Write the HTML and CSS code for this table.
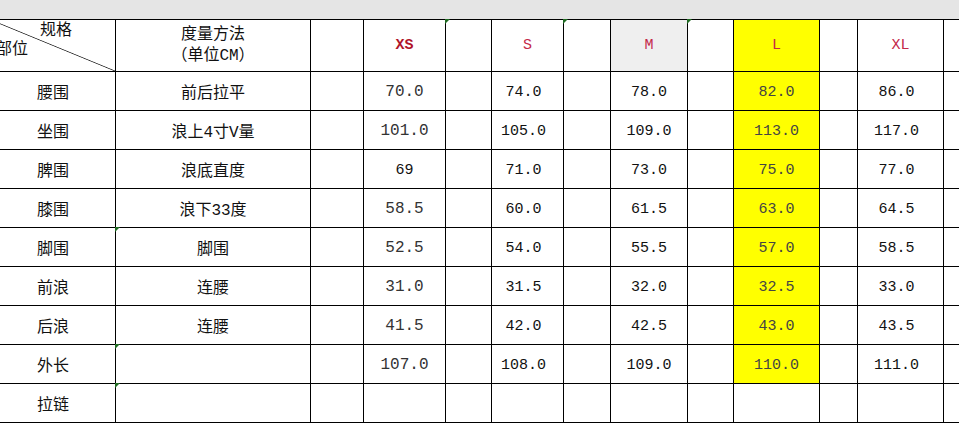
FILE: index.html
```html
<!DOCTYPE html>
<html lang="zh">
<head>
<meta charset="utf-8">
<title>尺码表</title>
<link rel="stylesheet" href="styles.css">
</head>
<body>
<div class="topbar"></div>
<div class="sheet">
  <div class="c head corner"><span class="spec">规格</span><span class="part">部位</span></div>
  <div class="c head method"><span>度量方法</span><span>（单位CM）</span></div>
  <div class="c"></div>
  <div class="c size bold">XS</div>
  <div class="c note"></div>
  <div class="c size">S</div>
  <div class="c note"></div>
  <div class="c size grey">M</div>
  <div class="c note"></div>
  <div class="c size hl">L</div>
  <div class="c"></div>
  <div class="c size">XL</div>
  <div class="c"></div>

  <div class="c zh">腰围</div><div class="c zh">前后拉平</div><div class="c"></div><div class="c num big">70.0</div><div class="c"></div><div class="c num off">74.0</div><div class="c"></div><div class="c num">78.0</div><div class="c"></div><div class="c num hl">82.0</div><div class="c"></div><div class="c num off">86.0</div><div class="c"></div>

  <div class="c zh">坐围</div><div class="c zh">浪上4寸V量</div><div class="c"></div><div class="c num big">101.0</div><div class="c"></div><div class="c num off">105.0</div><div class="c"></div><div class="c num">109.0</div><div class="c"></div><div class="c num hl">113.0</div><div class="c"></div><div class="c num off">117.0</div><div class="c"></div>

  <div class="c zh">脾围</div><div class="c zh">浪底直度</div><div class="c"></div><div class="c num">69</div><div class="c"></div><div class="c num off">71.0</div><div class="c"></div><div class="c num">73.0</div><div class="c"></div><div class="c num hl">75.0</div><div class="c"></div><div class="c num off">77.0</div><div class="c"></div>

  <div class="c zh">膝围</div><div class="c zh">浪下33度</div><div class="c"></div><div class="c num big">58.5</div><div class="c"></div><div class="c num off">60.0</div><div class="c"></div><div class="c num">61.5</div><div class="c"></div><div class="c num hl">63.0</div><div class="c"></div><div class="c num off">64.5</div><div class="c"></div>

  <div class="c zh">脚围</div><div class="c zh note">脚围</div><div class="c"></div><div class="c num big">52.5</div><div class="c"></div><div class="c num off">54.0</div><div class="c"></div><div class="c num">55.5</div><div class="c"></div><div class="c num hl">57.0</div><div class="c"></div><div class="c num off">58.5</div><div class="c"></div>

  <div class="c zh">前浪</div><div class="c zh">连腰</div><div class="c"></div><div class="c num big">31.0</div><div class="c"></div><div class="c num off">31.5</div><div class="c"></div><div class="c num">32.0</div><div class="c"></div><div class="c num hl">32.5</div><div class="c"></div><div class="c num off">33.0</div><div class="c"></div>

  <div class="c zh">后浪</div><div class="c zh">连腰</div><div class="c"></div><div class="c num big">41.5</div><div class="c"></div><div class="c num off">42.0</div><div class="c"></div><div class="c num">42.5</div><div class="c"></div><div class="c num hl">43.0</div><div class="c"></div><div class="c num off">43.5</div><div class="c"></div>

  <div class="c zh">外长</div><div class="c zh note"></div><div class="c"></div><div class="c num big">107.0</div><div class="c"></div><div class="c num off">108.0</div><div class="c"></div><div class="c num">109.0</div><div class="c"></div><div class="c num hl">110.0</div><div class="c"></div><div class="c num off">111.0</div><div class="c"></div>

  <div class="c zh">拉链</div><div class="c zh note"></div><div class="c"></div><div class="c"></div><div class="c"></div><div class="c"></div><div class="c"></div><div class="c"></div><div class="c"></div><div class="c"></div><div class="c"></div><div class="c"></div><div class="c"></div>
</div>
</body>
</html>
```
FILE: styles.css
```css
html, body {
  margin: 0;
  padding: 0;
  overflow: hidden;
  background: #fff;
}
body {
  width: 959px;
  height: 423px;
  font-family: "Liberation Mono", "Noto Sans CJK SC", monospace;
  color: #111;
}
.topbar {
  height: 19px;
  background: #e5e5e5;
}
.sheet {
  display: grid;
  grid-template-columns: 124px 194px 52px 81px 45px 71px 46px 76px 45px 85px 37px 85px 60px;
  grid-template-rows: 51px repeat(9, 38px);
  gap: 1px;
  padding: 1px;
  margin-left: -10px;
  width: max-content;
  background: #000;
}
.c {
  position: relative;
  background: #fff;
  display: flex;
  align-items: center;
  justify-content: center;
  font-size: 15px;
  white-space: nowrap;
}
.zh {
  font-size: 16px;
}
.head {
  font-size: 16px;
}
.corner {
  flex-direction: column;
  align-items: stretch;
  justify-content: flex-start;
  padding-top: 2px;
  line-height: 19px;
  background: linear-gradient(to top right, #fff calc(50% - 0.8px), #333 50%, #fff calc(50% + 0.8px));
}
.corner .spec {
  padding-left: 49px;
}
.corner .part {
  padding-left: 5px;
}
.method {
  flex-direction: column;
  line-height: 21px;
  padding-top: 1px;
}
.size {
  color: #c42848;
}
.size.bold {
  font-weight: bold;
  color: #b0142a;
}
.grey {
  background: #efefef;
}
.hl {
  background: #ffff00;
}
.num {
  padding-top: 2px;
}
.num.big {
  font-size: 16px;
  color: #333;
}
.num.hl {
  color: #444;
}
.num.off {
  padding-right: 8px;
}
.note::before {
  content: "";
  position: absolute;
  top: -1px;
  left: -1px;
  border-style: solid;
  border-width: 5px 5px 0 0;
  border-color: #1f6b22 transparent transparent transparent;
}
```
